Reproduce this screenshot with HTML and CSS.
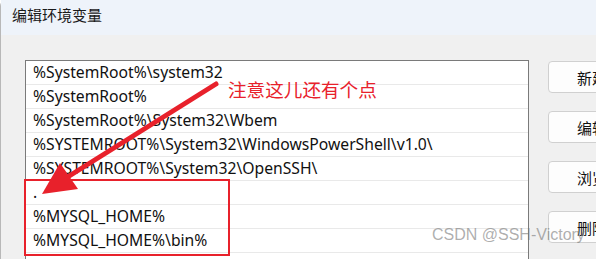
FILE: index.html
```html
<!DOCTYPE html>
<html lang="zh-CN">
<head>
    <meta charset="UTF-8">
    <title>编辑环境变量</title>
    <link rel="stylesheet" href="styles.css">
</head>
<body>
    <div class="window">
        <div class="title-bar">编辑环境变量</div>
        <div class="content">
            <div class="path-list">
                <div class="row">%SystemRoot%\system32</div>
                <div class="row">%SystemRoot%</div>
                <div class="row">%SystemRoot%\System32\Wbem</div>
                <div class="row">%SYSTEMROOT%\System32\WindowsPowerShell\v1.0\</div>
                <div class="row">%SYSTEMROOT%\System32\OpenSSH\</div>
                <div class="row">.</div>
                <div class="row">%MYSQL_HOME%</div>
                <div class="row">%MYSQL_HOME%\bin%</div>
                <div class="row"></div>
            </div>
            <div class="actions">
                <button class="btn">新建(N)</button>
                <button class="btn">编辑(E)</button>
                <button class="btn">浏览(B)...</button>
                <button class="btn">删除(D)</button>
            </div>
        </div>
    </div>

    <!-- annotation layer -->
    <div class="mark-box"></div>
    <svg class="arrow" width="596" height="259" viewBox="0 0 596 259">
        <line x1="216" y1="84" x2="66" y2="178" stroke="#e8212b" stroke-width="5" stroke-linecap="round"/>
        <polygon points="42,194 60,163 78,189" fill="#e8212b"/>
    </svg>
    <div class="note">注意这儿还有个点</div>
    <div class="watermark">CSDN @SSH-Victory</div>
</body>
</html>
```

FILE: styles.css
```css
body, html {
    margin: 0;
    padding: 0;
    height: 100%;
    overflow: hidden;
    font-family: "Noto Sans", "Noto Sans CJK SC", sans-serif;
}

.window {
    height: 100%;
    background-color: #f0f0f0;
    border-left: 1px solid #b8b8b8;
    border-top-left-radius: 6px;
}

.title-bar {
    height: 35px;
    padding-left: 11px;
    line-height: 31px;
    font-size: 15px;
    color: #1a1a1a;
    background-color: #eef3fa;
}

.content {
    display: flex;
    padding: 25px 0 0 24px;
}

.path-list {
    width: 502px;
    flex-shrink: 0;
    background-color: white;
    border: 1px solid #7a7a7a;
}

.row {
    height: 23px;
    line-height: 23px;
    padding-left: 7px;
    font-size: 15.7px;
    color: #111;
    border-bottom: 1px solid #e9e9e9;
    white-space: nowrap;
    overflow: hidden;
}

.actions {
    display: flex;
    flex-direction: column;
    gap: 18px;
    margin-left: 19px;
    padding-top: 1px;
}

.btn {
    width: 100px;
    height: 32px;
    padding: 0 0 0 28px;
    text-align: left;
    font-family: "Noto Sans CJK SC", sans-serif;
    font-size: 15px;
    color: #111;
    background-color: #fdfdfd;
    border: 1px solid #d0d0d0;
    border-radius: 4px;
}

.mark-box {
    position: absolute;
    left: 24px;
    top: 179px;
    width: 202px;
    height: 73px;
    border: 2px solid #e8212b;
}

.arrow {
    position: absolute;
    left: 0;
    top: 0;
}

.note {
    position: absolute;
    left: 228px;
    top: 75px;
    font-family: "Noto Sans CJK SC", sans-serif;
    font-size: 18.6px;
    color: #e8212b;
}

.watermark {
    position: absolute;
    left: 432px;
    top: 226px;
    font-family: "Liberation Sans", Arial, sans-serif;
    font-size: 16px;
    color: rgba(120, 120, 120, 0.6);
}
```
